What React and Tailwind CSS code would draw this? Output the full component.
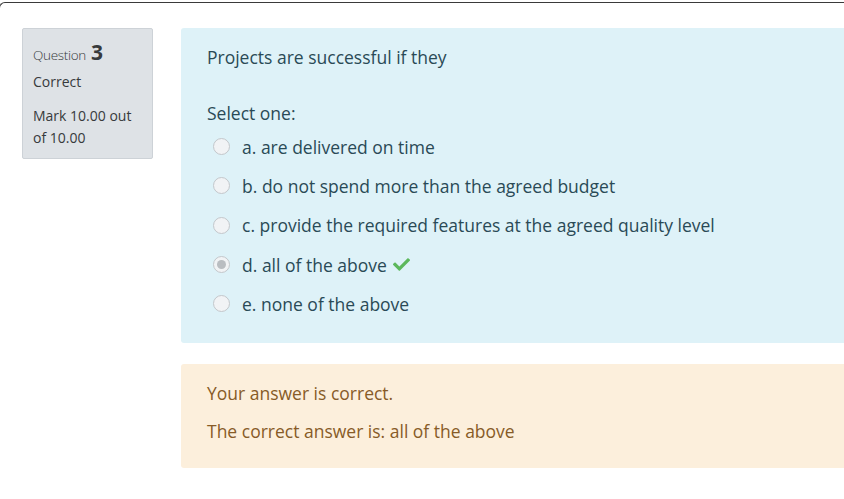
import React from "react";

const options = [
    { key: "a", label: "are delivered on time" },
    { key: "b", label: "do not spend more than the agreed budget" },
    { key: "c", label: "provide the required features at the agreed quality level" },
    { key: "d", label: "all of the above", checked: true },
    { key: "e", label: "none of the above" }
];

const Radio = ({ checked }) => (
    <span className="flex h-[17px] w-[17px] shrink-0 items-center justify-center rounded-full border border-[#c3c7cb] bg-[#f1f3f5]">
        {checked && <span className="h-[9px] w-[9px] rounded-full bg-[#b9bdc1]" />}
    </span>
);

// font-awesome style check
const Check = () => (
    <svg viewBox="0 0 512 512" className="ml-[6px] h-[17px] w-[17px]" fill="#5cb85c">
        <path d="M173.898 439.404l-166.4-166.4c-9.997-9.997-9.997-26.206 0-36.204l36.203-36.204c9.997-9.998 26.207-9.998 36.204 0L192 312.69 432.095 72.596c9.997-9.997 26.207-9.997 36.204 0l36.203 36.204c9.997 9.997 9.997 26.206 0 36.204l-294.4 294.401c-9.998 9.997-26.207 9.997-36.204-.001z" />
    </svg>
);

export default function App() {
    return (
        <div
            className="min-h-[499px] overflow-hidden bg-white pt-[2px]"
            style={{ fontFamily: "'Open Sans', 'Liberation Sans', sans-serif" }}
        >
            <div className="-ml-px w-[900px] rounded-tl-[6px] border-l border-t border-[#3a3a3a] pb-[30px] pl-[22px] pt-[25px]">
                <div className="flex items-start gap-[28px]">
                    {/* Question info */}
                    <div className="h-[131px] w-[131px] shrink-0 rounded-[2px] border border-[#cdd2d7] bg-[#dee2e6] px-[10px] pt-[10px] text-[#373a3c]">
                        <div className="flex items-baseline text-[13.5px] leading-[26px]">
                            <span className="font-light tracking-[-0.3px]">Question</span>
                            <span className="ml-[5px] text-[21px] font-bold">3</span>
                        </div>
                        <div className="mt-[4px] text-[14px] leading-[20px]">Correct</div>
                        <div className="mt-[13px] text-[14px] leading-[22px]">
                            Mark 10.00 out of 10.00
                        </div>
                    </div>

                    <div className="flex flex-1 flex-col gap-[21px]">
                        {/* Formulation */}
                        <div className="h-[315px] rounded-[3px] bg-[#def2f8] pl-[26px] pt-[16px] text-[#2a4a56]">
                            <p className="text-[17.5px] leading-[26px]">Projects are successful if they</p>
                            <p className="mt-[30px] text-[17.5px] leading-[26px]">Select one:</p>
                            <div className="mt-[1px] flex flex-col">
                                {options.map((o) => (
                                    <div key={o.key} className="flex h-[39.3px] items-center">
                                        <span className="ml-[6px] mr-[12px]">
                                            <Radio checked={o.checked} />
                                        </span>
                                        <span className="text-[17.5px] leading-[26px]">
                                            {o.key}. {o.label}
                                        </span>
                                        {o.checked && <Check />}
                                    </div>
                                ))}
                            </div>
                        </div>

                        {/* Outcome */}
                        <div className="h-[104px] rounded-[3px] bg-[#fcefdc] pl-[26px] pt-[16px] text-[#875b27]">
                            <p className="text-[17.5px] leading-[26px]">Your answer is correct.</p>
                            <p className="mt-[12px] text-[17.5px] leading-[26px]">
                                The correct answer is: all of the above
                            </p>
                        </div>
                    </div>
                </div>
            </div>
        </div>
    );
}
